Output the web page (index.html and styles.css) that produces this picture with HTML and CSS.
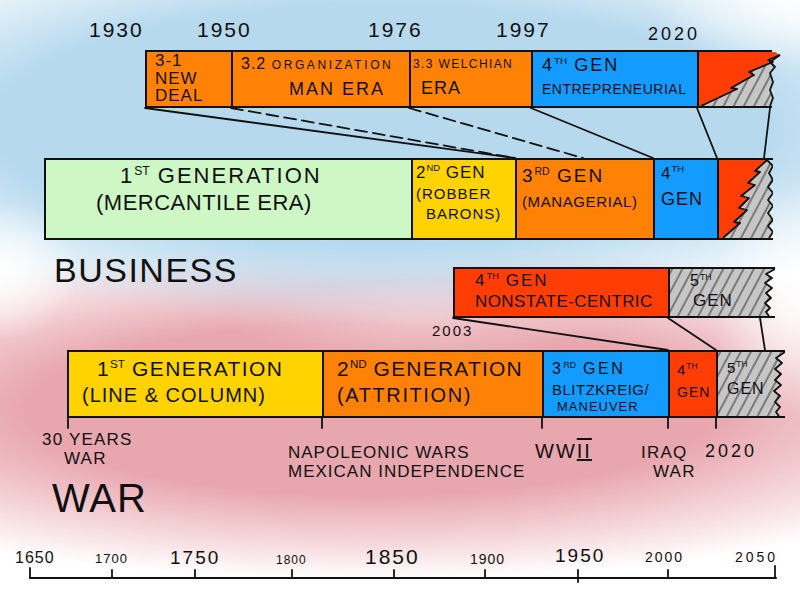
FILE: index.html
```html
<!DOCTYPE html>
<html lang="en">
<head>
<meta charset="utf-8">
<title>Generations of Business and War</title>
<link rel="stylesheet" href="styles.css">
</head>
<body>
<div class="canvas">
  <svg class="links" width="800" height="600" viewBox="0 0 800 600">
    <defs>
      <pattern id="hatch" patternUnits="userSpaceOnUse" width="9" height="9" patternTransform="rotate(28)">
        <line x1="2" y1="0" x2="2" y2="9" stroke="#3a3a3a" stroke-width="1.1"/>
      </pattern>
    </defs>
    <g class="ln">
      <line x1="145" y1="108" x2="515" y2="158"/>
      <line x1="231" y1="108" x2="515" y2="158" class="dash"/>
      <line x1="409" y1="108" x2="583" y2="158" class="dash"/>
      <line x1="531" y1="108" x2="653" y2="158"/>
      <line x1="697" y1="108" x2="717" y2="158"/>
      <line x1="770" y1="108" x2="764" y2="158"/>
      <line x1="453" y1="318" x2="668" y2="350"/>
      <line x1="668" y1="318" x2="716" y2="350"/>
      <line x1="760" y1="318" x2="765" y2="350"/>
      <line x1="68" y1="416" x2="68" y2="428"/>
      <line x1="322" y1="416" x2="322" y2="428"/>
      <line x1="542" y1="416" x2="542" y2="428"/>
      <line x1="668" y1="416" x2="668" y2="428"/>
      <line x1="716" y1="416" x2="716" y2="428"/>
      <line x1="30" y1="578" x2="776" y2="578" class="axis"/>
      <line x1="30" y1="568" x2="30" y2="578"/>
      <line x1="112" y1="570" x2="112" y2="578"/>
      <line x1="195" y1="570" x2="195" y2="578"/>
      <line x1="292" y1="570" x2="292" y2="578"/>
      <line x1="394" y1="570" x2="394" y2="578"/>
      <line x1="485" y1="570" x2="485" y2="578"/>
      <line x1="578" y1="570" x2="578" y2="582"/>
      <line x1="668" y1="570" x2="668" y2="578"/>
      <line x1="775" y1="566" x2="775" y2="578"/>
    </g>
  </svg>

  <div class="yr y1930">1930</div>
  <div class="yr y1950">1950</div>
  <div class="yr y1976">1976</div>
  <div class="yr y1997">1997</div>
  <div class="yr y2020">2020</div>

  <!-- Business sub-eras -->
  <div class="bar bar-sub">
    <div class="seg orange sub1">
      <div class="t18">3-1</div>
      <div class="t18">NEW</div>
      <div class="t18">DEAL</div>
    </div>
    <div class="seg orange sub2">
      <div class="l1"><span class="n16">3.2</span> <span class="s12">ORGANIZATION</span></div>
      <div class="l2">MAN ERA</div>
    </div>
    <div class="seg orange sub3">
      <div class="l1 s12b">3.3 WELCHIAN</div>
      <div class="l2">ERA</div>
    </div>
    <div class="seg blue sub4">
      <div class="l1">4<sup>TH</sup> GEN</div>
      <div class="l2">ENTREPRENEURIAL</div>
    </div>
    <div class="seg torn torn-sub">
      <svg width="82" height="54" viewBox="0 0 82 54">
        <polygon fill="#ff3d05" points="0,0 76,0 81,3 69,8 74,10 50,20 55,23 32,36 38,37 2,54 0,54"/>
        <polygon fill="#c6c6c6" points="81,3 69,8 74,10 50,20 55,23 32,36 38,37 2,54 71,54 74,46 71,38 74,30 71,21 76,15 71,10"/>
        <polygon fill="url(#hatch)" points="81,3 69,8 74,10 50,20 55,23 32,36 38,37 2,54 71,54 74,46 71,38 74,30 71,21 76,15 71,10"/>
        <polyline class="edge" points="81,3 69,8 74,10 50,20 55,23 32,36 38,37 2,54"/>
        <polyline class="edge" points="81,3 71,10 76,15 71,21 74,30 71,38 74,46 71,54"/>
      </svg>
    </div>
  </div>

  <!-- Business generations -->
  <div class="bar bar-biz">
    <div class="seg green biz1">
      <div class="l1">1<sup>ST</sup> GENERATION</div>
      <div class="l2">(MERCANTILE ERA)</div>
    </div>
    <div class="seg yellow biz2">
      <div class="l1">2<sup>ND</sup> GEN</div>
      <div class="l2">(ROBBER</div>
      <div class="l3">BARONS)</div>
    </div>
    <div class="seg orange biz3">
      <div class="l1">3<sup>RD</sup> GEN</div>
      <div class="l2">(MANAGERIAL)</div>
    </div>
    <div class="seg blue biz4">
      <div class="l1">4<sup>TH</sup></div>
      <div class="l2">GEN</div>
    </div>
    <div class="seg torn torn-biz">
      <svg width="54" height="78" viewBox="0 0 54 78">
        <polygon fill="#ff3d05" points="0,0 48,0 36,11 41,12 29,23 36,25 22,36 30,38 20,48 28,50 15,62 21,63 4,78 0,78"/>
        <polygon fill="#c6c6c6" points="48,0 36,11 41,12 29,23 36,25 22,36 30,38 20,48 28,50 15,62 21,63 4,78 50,78 54,72 49,66 54,60 49,53 54,46 49,40 54,33 49,27 54,20 50,13 54,6"/>
        <polygon fill="url(#hatch)" points="48,0 36,11 41,12 29,23 36,25 22,36 30,38 20,48 28,50 15,62 21,63 4,78 50,78 54,72 49,66 54,60 49,53 54,46 49,40 54,33 49,27 54,20 50,13 54,6"/>
        <polyline class="edge" points="48,0 36,11 41,12 29,23 36,25 22,36 30,38 20,48 28,50 15,62 21,63 4,78"/>
        <polyline class="edge" points="48,0 54,6 50,13 54,20 49,27 54,33 49,40 54,46 49,53 54,60 49,66 54,72 50,78"/>
      </svg>
    </div>
  </div>

  <div class="label business">BUSINESS</div>

  <!-- War sub-eras -->
  <div class="bar bar-wsub">
    <div class="seg red wsub1">
      <div class="l1">4<sup>TH</sup> GEN</div>
      <div class="l2">NONSTATE-CENTRIC</div>
    </div>
    <div class="seg torn torn-wsub">
      <svg width="105" height="47" viewBox="0 0 105 47">
        <polygon fill="#c6c6c6" points="0,0 105,0 96,5 102,9 95,14 102,19 96,24 101,29 95,34 100,39 96,43 99,47 0,47"/>
        <polygon fill="url(#hatch)" points="0,0 105,0 96,5 102,9 95,14 102,19 96,24 101,29 95,34 100,39 96,43 99,47 0,47"/>
        <polyline class="edge" points="105,0 96,5 102,9 95,14 102,19 96,24 101,29 95,34 100,39 96,43 99,47"/>
      </svg>
      <div class="txt">
        <div class="l1">5<sup>TH</sup></div>
        <div class="l2">GEN</div>
      </div>
    </div>
  </div>

  <div class="label y2003">2003</div>

  <!-- War generations -->
  <div class="bar bar-war">
    <div class="seg yellow war1">
      <div class="l1">1<sup>ST</sup> GENERATION</div>
      <div class="l2">(LINE &amp; COLUMN)</div>
    </div>
    <div class="seg orange war2">
      <div class="l1">2<sup>ND</sup> GENERATION</div>
      <div class="l2">(ATTRITION)</div>
    </div>
    <div class="seg blue war3">
      <div class="l1">3<sup>RD</sup> GEN</div>
      <div class="l2">BLITZKREIG/</div>
      <div class="l3">MANEUVER</div>
    </div>
    <div class="seg red war4">
      <div class="l1">4<sup>TH</sup></div>
      <div class="l2">GEN</div>
    </div>
    <div class="seg torn torn-war">
      <svg width="67" height="64" viewBox="0 0 67 64">
        <polygon fill="#c6c6c6" points="0,0 67,0 58,6 64,11 57,17 63,22 57,28 63,33 56,39 62,44 57,50 62,55 58,60 61,64 0,64"/>
        <polygon fill="url(#hatch)" points="0,0 67,0 58,6 64,11 57,17 63,22 57,28 63,33 56,39 62,44 57,50 62,55 58,60 61,64 0,64"/>
        <polyline class="edge" points="67,0 58,6 64,11 57,17 63,22 57,28 63,33 56,39 62,44 57,50 62,55 58,60 61,64"/>
      </svg>
      <div class="txt">
        <div class="l1">5<sup>TH</sup></div>
        <div class="l2">GEN</div>
      </div>
    </div>
  </div>

  <div class="label ev ev-30">30 YEARS<br><span class="ind">WAR</span></div>
  <div class="label ev ev-nap">NAPOLEONIC WARS<br>MEXICAN INDEPENDENCE</div>
  <div class="label ev ev-ww">WW<span class="roman">II</span></div>
  <div class="label ev ev-iraq">IRAQ<br><span class="ind">WAR</span></div>
  <div class="label ev ev-2020">2020</div>

  <div class="label war-title">WAR</div>

  <div class="ax a1650">1650</div>
  <div class="ax a1700">1700</div>
  <div class="ax a1750">1750</div>
  <div class="ax a1800">1800</div>
  <div class="ax a1850">1850</div>
  <div class="ax a1900">1900</div>
  <div class="ax a1950">1950</div>
  <div class="ax a2000">2000</div>
  <div class="ax a2050">2050</div>
</div>
</body>
</html>
```

FILE: styles.css
```css
* { box-sizing: border-box; }

body {
  margin: 0;
  background: #ffffff;
}

.canvas {
  position: relative;
  width: 800px;
  height: 600px;
  overflow: hidden;
  font-family: "Liberation Sans", Arial, sans-serif;
  color: #111;
  background:
    radial-gradient(ellipse 150px 70px at 800px 0px, rgba(255,255,255,0.95) 0%, rgba(255,255,255,0) 100%),
    radial-gradient(ellipse 80px 70px at 0px 270px, rgba(255,255,255,0.95) 0%, rgba(255,255,255,0) 100%),
    radial-gradient(ellipse 90px 120px at 800px 300px, rgba(255,255,255,0.9) 0%, rgba(255,255,255,0) 100%),
    radial-gradient(ellipse 200px 40px at 420px 320px, rgba(255,255,255,0.35) 0%, rgba(255,255,255,0) 100%),
    radial-gradient(ellipse 640px 200px at 380px 125px, #b6d9ee 60%, rgba(182,217,238,0) 100%),
    radial-gradient(ellipse 680px 170px at 370px 410px, #e8a6ae 50%, rgba(232,166,174,0) 100%),
    #ffffff;
}

.links {
  position: absolute;
  left: 0;
  top: 0;
}

.ln line {
  stroke: #111;
  stroke-width: 1.8;
  stroke-linecap: round;
}

.links .dash {
  stroke-dasharray: 12 6;
}

.links .axis {
  stroke-width: 2;
}

sup {
  font-size: 0.55em;
  vertical-align: 0.7em;
  line-height: 0;
  letter-spacing: 0;
}

/* ---------- bars ---------- */
.bar {
  position: absolute;
  display: flex;
  border: 2px solid #111;
  border-right: none;
}

.seg {
  position: relative;
  border-left: 2px solid #111;
  letter-spacing: 1px;
  white-space: nowrap;
}

.seg:first-child {
  border-left: none;
}

.orange { background: #ff8105; }
.blue   { background: #139bff; }
.green  { background: #cdf7c4; }
.yellow { background: #ffd300; }
.red    { background: #ff3d05; }

.torn svg {
  position: absolute;
  left: 0;
  top: 0;
}

.torn .edge {
  fill: none;
  stroke: #111;
  stroke-width: 1.8;
  stroke-linejoin: round;
}

.torn .txt {
  position: relative;
}

/* business sub-eras bar */
.bar-sub { left: 145px; top: 50px; width: 627px; height: 58px; }
.sub1 { width: 84px; padding: 0 0 0 8px; }
.sub2 { width: 178px; padding: 2px 0 0 8px; }
.sub3 { width: 122px; padding: 2px 0 0 2px; }
.sub4 { width: 166px; padding: 0 0 0 9px; }
.torn-sub { width: 75px; overflow: visible; }

.t18 { font-size: 17px; line-height: 17.5px; }
.n16 { font-size: 16px; }
.s12 { font-size: 12px; letter-spacing: 2.6px; }
.sub2 .l1 { line-height: 20px; }
.sub2 .l2 { font-size: 18px; line-height: 28px; padding-left: 48px; letter-spacing: 2px; }
.sub3 .l1 { font-size: 12px; line-height: 20px; letter-spacing: 1.4px; }
.sub3 .l2 { font-size: 18px; line-height: 28px; padding-left: 8px; }
.sub4 .l1 { font-size: 18px; line-height: 26px; letter-spacing: 2px; }
.sub4 .l2 { font-size: 14px; line-height: 22px; letter-spacing: 0.5px; }

/* business generations bar */
.bar-biz { left: 44px; top: 158px; width: 729px; height: 82px; }
.biz1 { width: 365px; padding: 3px 0 0 50px; }
.biz1 .l1 { font-size: 22px; line-height: 26px; padding-left: 24px; letter-spacing: 2px; }
.biz1 .l2 { font-size: 22px; line-height: 28px; letter-spacing: 0.5px; }
.biz2 { width: 104px; padding: 2px 0 0 3px; }
.biz2 .l1 { font-size: 17px; line-height: 22px; }
.biz2 .l2 { font-size: 15px; line-height: 20px; }
.biz2 .l3 { font-size: 15px; line-height: 20px; padding-left: 10px; }
.biz3 { width: 138px; padding: 3px 0 0 5px; }
.biz3 .l1 { font-size: 19px; line-height: 26px; letter-spacing: 2px; }
.biz3 .l2 { font-size: 15px; line-height: 26px; letter-spacing: 0.6px; }
.biz4 { width: 64px; padding: 2px 0 0 6px; }
.biz4 .l1 { font-size: 17px; line-height: 24px; }
.biz4 .l2 { font-size: 18px; line-height: 26px; }
.torn-biz { width: 56px; }

/* war sub-eras bar */
.bar-wsub { left: 453px; top: 267px; width: 322px; height: 51px; }
.wsub1 { width: 213px; padding: 2px 0 0 20px; }
.wsub1 .l1 { font-size: 17px; line-height: 20px; letter-spacing: 2px; }
.wsub1 .l2 { font-size: 17px; line-height: 22px; letter-spacing: 0.4px; }
.torn-wsub { width: 107px; }
.torn-wsub .txt { padding: 2px 0 0 20px; }
.torn-wsub .l1 { font-size: 16px; line-height: 20px; }
.torn-wsub .l2 { font-size: 17px; line-height: 20px; padding-left: 3px; }

/* war generations bar */
.bar-war { left: 67px; top: 350px; width: 718px; height: 68px; }
.war1 { width: 253px; padding: 4px 0 0 13px; }
.war1 .l1 { font-size: 21px; line-height: 26px; padding-left: 15px; letter-spacing: 1.4px; }
.war1 .l2 { font-size: 20px; line-height: 26px; letter-spacing: 1px; }
.war2 { width: 220px; padding: 4px 0 0 13px; }
.war2 .l1 { font-size: 21px; line-height: 26px; letter-spacing: 1.2px; }
.war2 .l2 { font-size: 20px; line-height: 26px; letter-spacing: 1.6px; }
.war3 { width: 126px; padding: 5px 0 0 8px; }
.war3 .l1 { font-size: 16px; line-height: 24px; letter-spacing: 2.5px; }
.war3 .l2 { font-size: 15px; line-height: 18px; letter-spacing: 0.5px; }
.war3 .l3 { font-size: 13px; line-height: 15px; padding-left: 5px; }
.war4 { width: 48px; padding: 7px 0 0 7px; }
.war4 .l1 { font-size: 15px; line-height: 22px; }
.war4 .l2 { font-size: 14px; line-height: 22px; }
.torn-war { width: 69px; }
.torn-war .txt { padding: 6px 0 0 9px; }
.torn-war .l1 { font-size: 15px; line-height: 20px; }
.torn-war .l2 { font-size: 16px; line-height: 22px; }

/* ---------- labels ---------- */
.yr, .label, .ax {
  position: absolute;
  line-height: 1;
  white-space: nowrap;
}

.yr { font-size: 21px; letter-spacing: 2px; top: 19px; }
.y1930 { left: 89px; }
.y1950 { left: 197px; }
.y1976 { left: 368px; }
.y1997 { left: 496px; }
.y2020 { left: 648px; top: 25px; font-size: 18px; letter-spacing: 3px; }

.business {
  left: 54px;
  top: 253px;
  font-size: 34px;
  letter-spacing: 1.5px;
}

.y2003 { left: 432px; top: 323px; font-size: 15px; letter-spacing: 2px; }

.ev { font-size: 17px; letter-spacing: 1.2px; line-height: 19px; }
.ev .ind { padding-left: 22px; }
.ev-30 { left: 42px; top: 430px; }
.ev-nap { left: 288px; top: 443px; letter-spacing: 1px; }
.ev-ww { left: 535px; top: 442px; font-size: 20px; letter-spacing: 2px; }
.ev-iraq { left: 641px; top: 443px; }
.ev-iraq .ind { padding-left: 12px; }
.ev-2020 { left: 705px; top: 442px; font-size: 18px; letter-spacing: 3px; }

.roman {
  text-decoration: underline overline;
  text-decoration-thickness: 2px;
}

.war-title {
  left: 52px;
  top: 478px;
  font-size: 40px;
  letter-spacing: 1px;
}

.ax { top: 549px; letter-spacing: 1px; }
.a1650 { left: 15px; font-size: 16px; top: 550px; }
.a1700 { left: 95px; font-size: 13px; top: 552px; }
.a1750 { left: 170px; font-size: 19px; top: 548px; letter-spacing: 2px; }
.a1800 { left: 276px; font-size: 12px; top: 554px; }
.a1850 { left: 365px; font-size: 21px; top: 546px; letter-spacing: 2px; }
.a1900 { left: 470px; font-size: 14px; top: 552px; }
.a1950 { left: 555px; font-size: 19px; top: 546px; letter-spacing: 2px; }
.a2000 { left: 645px; font-size: 14px; top: 550px; letter-spacing: 2px; }
.a2050 { left: 735px; font-size: 14px; top: 550px; letter-spacing: 3px; }
```
